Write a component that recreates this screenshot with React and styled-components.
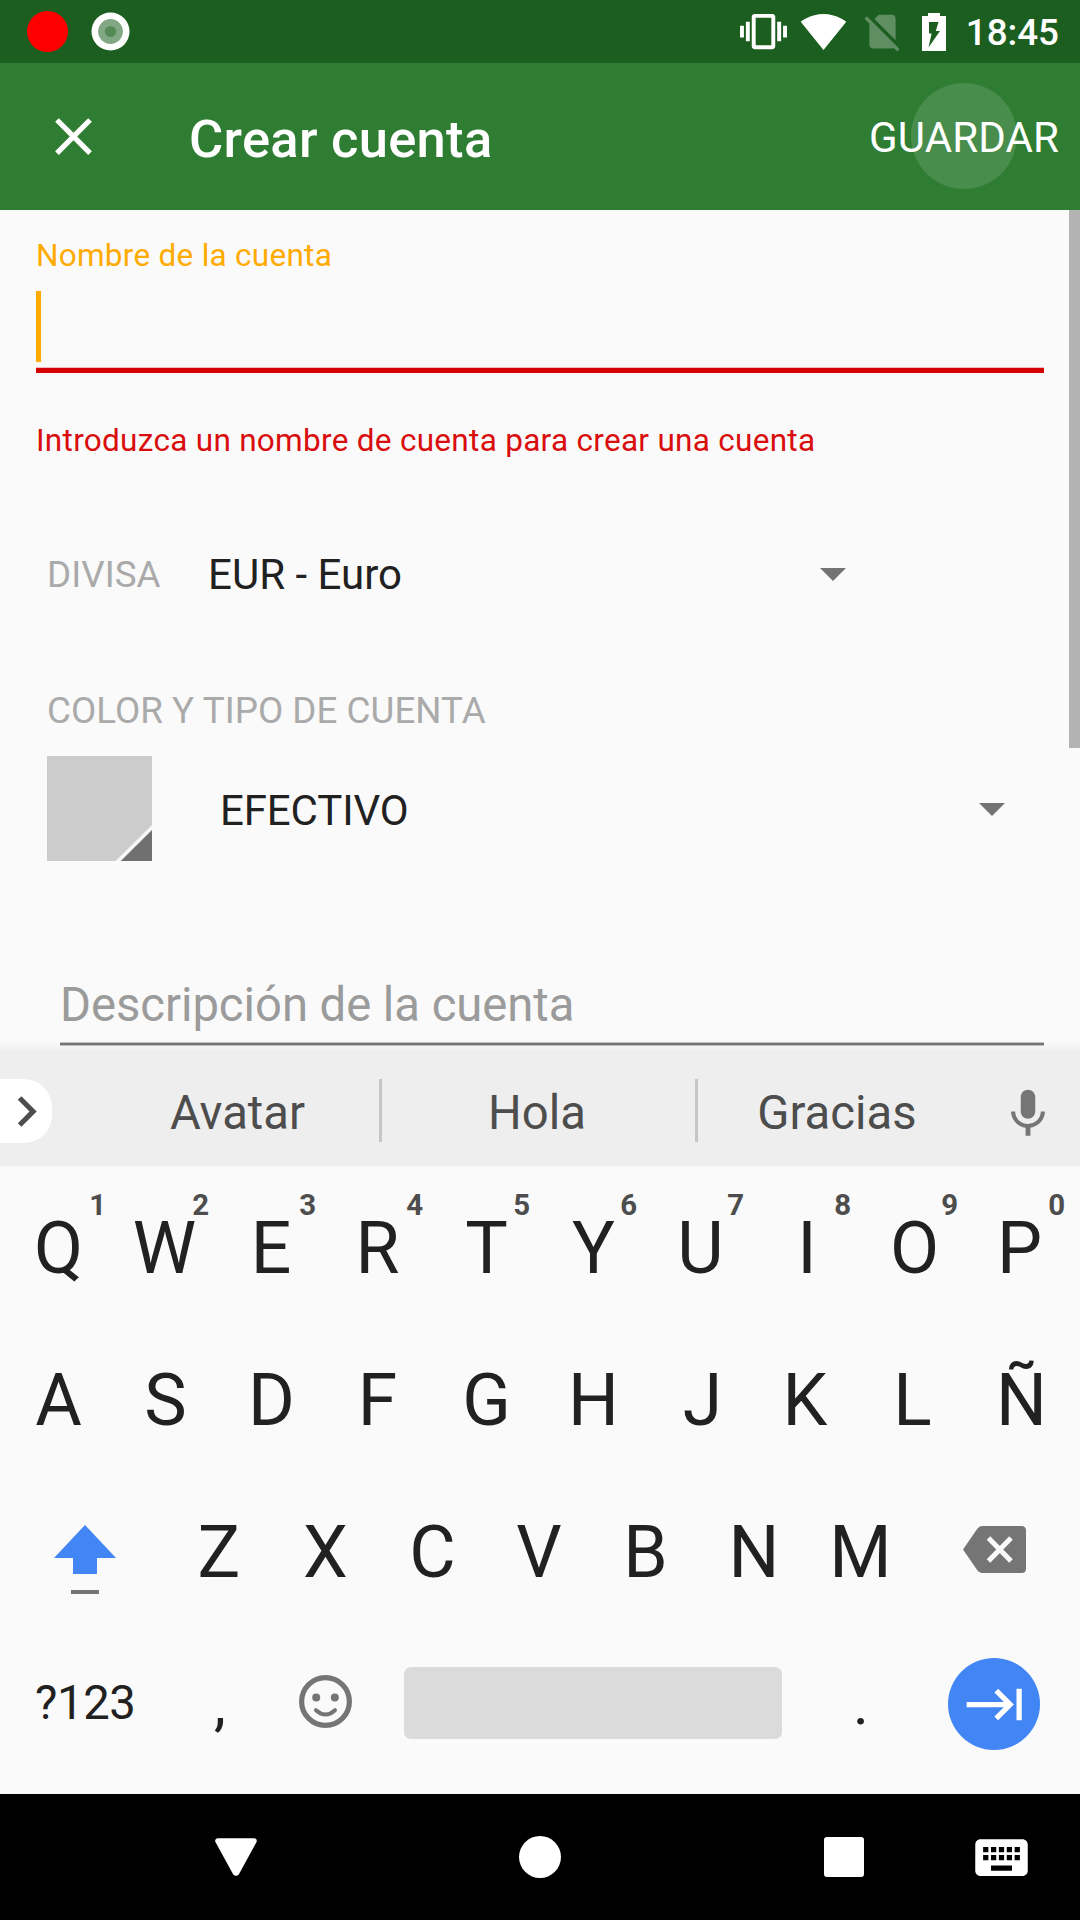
import React from "react";
import styled, { createGlobalStyle } from "styled-components";
import { MdClose, MdVibration, MdChevronRight, MdMic, MdKeyboardTab, MdKeyboard } from "react-icons/md";

const GlobalStyle = createGlobalStyle`
  * { box-sizing: border-box; }
  body { margin: 0; background: #fafafa; font-family: Roboto, "Noto Sans", sans-serif; }
  button { margin: 0; padding: 0; border: 0; background: none; font: inherit; color: inherit; }
  svg { display: block; flex: none; }
`;

const Screen = styled.div`
  width: 1080px;
  height: 1920px;
  display: flex;
  flex-direction: column;
  overflow: hidden;
  color: #212121;
`;

/* Status bar */
const StatusBar = styled.header`
  height: 63px;
  flex: none;
  display: flex;
  align-items: center;
  justify-content: space-between;
  padding: 0 21px 0 27px;
  background: #1b5e20;
  color: #fff;
`;
const StatusGroup = styled.div`
  display: flex;
  align-items: center;
  gap: ${(p) => p.$gap}px;
`;
const RecordDot = styled.span`
  width: 41px;
  height: 41px;
  border-radius: 50%;
  background: #f00;
`;
const Clock = styled.span`
  font-size: 36.75px;
  font-weight: 500;
  line-height: 44px;
  padding-top: 3px;
  margin-left: 3px;
`;

/* App bar */
const AppBar = styled.div`
  height: 147px;
  flex: none;
  display: flex;
  align-items: center;
  padding: 0 21px 0 42px;
  background: #2e7d32;
  color: #fff;
`;
const IconButton = styled.button`
  display: flex;
`;
const Title = styled.h1`
  flex: 1;
  margin: 0;
  padding: 4px 0 0 84px;
  font-size: 52.5px;
  font-weight: 500;
  line-height: 62px;
  letter-spacing: 0.28px;
`;
const SaveButton = styled.button`
  position: relative;
  padding-top: 2px;
  font-size: 42px;
  line-height: 50px;
  letter-spacing: 0.12px;
`;
const Ripple = styled.span`
  position: absolute;
  left: 42px;
  top: -28px;
  width: 106px;
  height: 106px;
  border-radius: 50%;
  background: rgba(255, 255, 255, 0.125);
`;

/* Form */
const Form = styled.main`
  position: relative;
  height: 841px;
  flex: none;
  padding: 27px 36px 0;
  display: flex;
  flex-direction: column;
`;
const ScrollThumb = styled.div`
  position: absolute;
  top: 0;
  right: 0;
  width: 11px;
  height: 538px;
  background: #b3b3b3;
`;
const FieldLabel = styled.label`
  font-size: 31.5px;
  line-height: 37px;
  letter-spacing: 0.27px;
  color: #ffab00;
`;
const NameInput = styled.div`
  height: 99px;
  padding-top: 17px;
  border-bottom: 5px solid #d50000;
  box-shadow: inset 0 -1px 0 #f0bcbc;
`;
const Caret = styled.div`
  width: 5px;
  height: 71px;
  background: #ffab00;
`;
const ErrorText = styled.p`
  margin: 48px 0 0;
  font-size: 31.5px;
  line-height: 40px;
  letter-spacing: 0.29px;
  color: #d90d0d;
`;
const CurrencyRow = styled.div`
  display: flex;
  align-items: center;
  height: 80px;
  margin-top: 73px;
  padding: 0 198.5px 0 11px;
`;
const Caption = styled.span`
  font-size: 36.75px;
  line-height: 44px;
  padding-top: 2px;
  letter-spacing: 0.04px;
  color: #aaa;
`;
const SectionCaption = styled(Caption)`
  margin-top: 73px;
  padding-left: 11px;
`;
const SelectValue = styled.span`
  flex: 1;
  padding: ${(p) => p.$top || 0}px 0 0 ${(p) => p.$left}px;
  font-size: 42px;
  line-height: 50px;
  letter-spacing: ${(p) => p.$tracking || 0}px;
`;
const TypeRow = styled.div`
  display: flex;
  align-items: center;
  height: 105px;
  margin-top: 23px;
  padding: 0 39.5px 0 11px;
`;
const ArrowSlot = styled.span`
  padding-top: 2px;
`;
const DescriptionInput = styled.div`
  height: 75px;
  margin: 109px 0 0 24px;
  border-bottom: 2px solid #757575;
  box-shadow: 0 1px 0 #c4c4c4, inset 0 -1px 0 #c4c4c4;
  font-size: 47.25px;
  line-height: 70px;
  letter-spacing: -0.05px;
  color: #9b9b9b;
`;
const KeyboardShade = styled.div`
  position: absolute;
  left: 0;
  right: 0;
  bottom: 0;
  height: 10px;
  background: linear-gradient(rgba(0, 0, 0, 0), rgba(0, 0, 0, 0.045));
`;

/* Keyboard */
const Suggestions = styled.div`
  height: 115px;
  flex: none;
  display: flex;
  align-items: center;
  background: #eee;
  color: #4d4d4d;
`;
const ExpandButton = styled.button`
  width: 52px;
  height: 64px;
  margin: 5px 45px 0 0;
  display: flex;
  align-items: center;
  border-radius: 0 28px 28px 0;
  background: #fff;
  svg { margin-left: -4px; }
`;
const Suggestion = styled.button`
  width: ${(p) => p.$width}px;
  padding: 8px ${(p) => p.$right || 1}px 0 0;
  text-align: center;
  font-size: 47.25px;
  line-height: 56px;
`;
const Divider = styled.span`
  width: 3px;
  height: 63px;
  margin-top: 4px;
  background: #c6c6c6;
`;
const MicButton = styled.button`
  margin: 10px 0 0 22px;
  color: #757575;
`;
const Keyboard = styled.section`
  height: 628px;
  flex: none;
  padding: 6px 5px 0;
  background: #fafafa;
`;
const KeyRow = styled.div`
  display: flex;
  height: 152px;
`;
const Key = styled.button`
  position: relative;
  width: ${(p) => p.$width || 107}px;
  display: flex;
  align-items: center;
  justify-content: center;
  font-size: ${(p) => p.$size || 71.4}px;
  line-height: 84px;
`;
const Letter = styled.span`
  padding-top: ${(p) => p.$top ?? 2}px;
  transform: translateX(${(p) => p.$nudge || 0}px);
`;
const ModeLabel = styled.span`
  padding-bottom: 2px;
  letter-spacing: -0.4px;
`;
const KeyHint = styled.span`
  position: absolute;
  top: 15px;
  right: ${(p) => p.$right}px;
  font-size: 29.4px;
  font-weight: 700;
  line-height: 36px;
  color: #4d4d4d;
`;
const ShiftFace = styled.span`
  display: flex;
  flex-direction: column;
  align-items: center;
  gap: 16px;
  padding: 14px 1px 0 0;
`;
const ShiftMark = styled.span`
  width: 28px;
  height: 4px;
  background: #757575;
`;
const IconFace = styled.span`
  padding: 0 ${(p) => p.$right || 0}px 5px 0;
`;
const SpaceBar = styled.button`
  width: 378px;
  height: 72px;
  align-self: center;
  margin: 0 26px 2px 24px;
  border-radius: 7px;
  background: #dbdbdb;
`;
const EnterFace = styled.span`
  width: 92px;
  height: 92px;
  display: flex;
  align-items: center;
  justify-content: center;
  margin-right: 2px;
  padding-left: 3px;
  border-radius: 50%;
  background: #4285f4;
  color: #fff;
`;

/* System navigation */
const NavBar = styled.nav`
  height: 126px;
  flex: none;
  display: flex;
  align-items: center;
  padding-left: 215px;
  background: #000;
  color: #fff;
`;
const NavItem = styled.button`
  margin-left: ${(p) => p.$gap || 0}px;
`;
const HomeDot = styled.span`
  display: block;
  width: 42px;
  height: 42px;
  border-radius: 50%;
  background: #fff;
`;
const RecentsSquare = styled.span`
  display: block;
  width: 40px;
  height: 40px;
  border-radius: 3px;
  background: #fff;
`;

const TargetIcon = () => (
  <svg width="39" height="39" viewBox="0 0 39 39">
    <circle cx="19.5" cy="19.5" r="19" fill="#fff" />
    <circle cx="19.5" cy="19.5" r="12.4" fill="#82a785" />
    <circle cx="19.5" cy="19.5" r="5.6" fill="#558a57" />
  </svg>
);
const WifiIcon = () => (
  <svg width="47" height="47" viewBox="0 0 24 24" fill="currentColor">
    <path d="M12.01 21.49L23.64 7c-.45-.34-4.93-4-11.64-4C5.28 3 .81 6.66.36 7l11.63 14.49.01.01.01-.01z" />
  </svg>
);
const NoSimIcon = () => (
  <svg width="45" height="45" viewBox="0 0 24 24" fill="rgba(255,255,255,0.3)">
    <path d="M18.99 5c0-1.1-.89-2-1.99-2h-7L7.66 5.34 19 16.68 18.99 5zM3.65 3.88L2.38 5.15 5 7.77V19c0 1.1.9 2 2 2h10.01c.35 0 .67-.1.96-.26l1.88 1.88 1.27-1.27L3.65 3.88z" />
  </svg>
);
const BatteryIcon = () => (
  <svg width="24" height="38" viewBox="0 0 24 38">
    <path fill="#fff" fillRule="evenodd" d="M6 0H18V3H24V38H0V3H6Z M7 9V20.6H9.6L6.5 34.5L18 18H13.8L16.5 9Z" />
  </svg>
);
const DropArrow = () => (
  <svg width="26" height="13" viewBox="0 0 26 13">
    <path d="M0 0H26L13 13Z" fill="#737373" />
  </svg>
);
const Swatch = () => (
  <svg width="105" height="105" viewBox="0 0 105 105">
    <path d="M0 0H105V105H0Z" fill="#ccc" />
    <path d="M105 69V105H68.5Z" fill="#f7f7f7" />
    <path d="M105 74V105H73.8Z" fill="#707070" />
  </svg>
);
const ShiftArrow = () => (
  <svg width="62" height="49" viewBox="0 0 62 49">
    <path d="M31 0L62 33H43V49H19V33H0Z" fill="#4285f4" />
  </svg>
);
const BackspaceIcon = () => (
  <svg width="63" height="47" viewBox="0 0 63 47">
    <path d="M19 0H58.500Q63 0 63 4.500V42.500Q63 47 58.500 47H19Q16 47 14.300 44.300L0 23.500L14.300 2.700Q16 0 19 0Z" fill="#757575" />
    <path d="M25.500 12L48 35M48 12L25.500 35" stroke="#fafafa" strokeWidth="5" />
  </svg>
);
const SmileIcon = () => (
  <svg width="53" height="53" viewBox="0 0 53 53" fill="none" stroke="#757575">
    <circle cx="26.5" cy="26.5" r="23.9" strokeWidth="5.2" />
    <circle cx="17.200" cy="22.600" r="4" fill="#757575" stroke="none" />
    <circle cx="35.800" cy="22.600" r="4" fill="#757575" stroke="none" />
    <path d="M17 35.200Q26.500 43.800 36 35.200" strokeWidth="4" strokeLinecap="round" />
  </svg>
);
const BackTriangle = () => (
  <svg width="42" height="38" viewBox="0 0 42 38">
    <path d="M3 3H39L21.500 35H20.500Z" fill="#fff" stroke="#fff" strokeWidth="5.500" strokeLinejoin="round" />
  </svg>
);

const TOP = [["Q", 1], ["W", 2], ["E", 3], ["R", 4], ["T", 5], ["Y", 6], ["U", 7], ["I", 8], ["O", 9], ["P", 0]];
const MIDDLE = [..."ASDFGHJKLÑ"];
const BOTTOM = [..."ZXCVBNM"];

const NUDGE = { W: -1, E: -1.5, R: -2, D: -1, F: -2, J: 2, K: -2.5, L: -2, P: -2, B: -1.5, I: -0.5, X: -0.5, V: -1, C: -0.5, M: -0.5 };

const LetterKey = ({ letter, children }) => (
  <Key>
    <Letter $nudge={NUDGE[letter]}>{letter}</Letter>
    {children}
  </Key>
);

export default function App() {
  return (
    <Screen>
      <GlobalStyle />
      <StatusBar>
        <StatusGroup $gap={23}>
          <RecordDot />
          <TargetIcon />
        </StatusGroup>
        <StatusGroup $gap={17}>
          <StatusGroup $gap={13}>
            <MdVibration size={47} />
            <WifiIcon />
            <NoSimIcon />
          </StatusGroup>
          <BatteryIcon />
          <Clock>18:45</Clock>
        </StatusGroup>
      </StatusBar>

      <AppBar>
        <IconButton aria-label="Cerrar"><MdClose size={63} /></IconButton>
        <Title>Crear cuenta</Title>
        <SaveButton><Ripple />GUARDAR</SaveButton>
      </AppBar>

      <Form>
        <FieldLabel>Nombre de la cuenta</FieldLabel>
        <NameInput><Caret /></NameInput>
        <ErrorText>Introduzca un nombre de cuenta para crear una cuenta</ErrorText>
        <CurrencyRow>
          <Caption>DIVISA</Caption>
          <SelectValue $left={47.5} $top={2}>EUR - Euro</SelectValue>
          <DropArrow />
        </CurrencyRow>
        <SectionCaption>COLOR Y TIPO DE CUENTA</SectionCaption>
        <TypeRow>
          <Swatch />
          <SelectValue $left={68} $top={4} $tracking={-0.12}>EFECTIVO</SelectValue>
          <ArrowSlot><DropArrow /></ArrowSlot>
        </TypeRow>
        <DescriptionInput>Descripción de la cuenta</DescriptionInput>
        <ScrollThumb />
        <KeyboardShade />
      </Form>

      <Suggestions>
        <ExpandButton aria-label="Más"><MdChevronRight size={61} /></ExpandButton>
        <Suggestion $width={282}>Avatar</Suggestion>
        <Divider />
        <Suggestion $width={313} $right={3}>Hola</Suggestion>
        <Divider />
        <Suggestion $width={279}>Gracias</Suggestion>
        <MicButton aria-label="Voz"><MdMic size={58} /></MicButton>
      </Suggestions>

      <Keyboard>
        <KeyRow>
          {TOP.map(([letter, digit]) => (
            <LetterKey key={letter} letter={letter}>
              <KeyHint $right={digit === 1 ? 6 : 10}>{digit}</KeyHint>
            </LetterKey>
          ))}
        </KeyRow>
        <KeyRow>
          {MIDDLE.map((letter) => <LetterKey key={letter} letter={letter} />)}
        </KeyRow>
        <KeyRow>
          <Key $width={160.5} aria-label="Mayúsculas">
            <ShiftFace><ShiftArrow /><ShiftMark /></ShiftFace>
          </Key>
          {BOTTOM.map((letter) => <LetterKey key={letter} letter={letter} />)}
          <Key $width={160.5} aria-label="Borrar"><IconFace><BackspaceIcon /></IconFace></Key>
        </KeyRow>
        <KeyRow>
          <Key $width={160.5} $size={47.25}><ModeLabel>?123</ModeLabel></Key>
          <Key $size={60}><Letter $nudge={1} $top={0}>,</Letter></Key>
          <Key aria-label="Emoji"><IconFace $right={2}><SmileIcon /></IconFace></Key>
          <SpaceBar aria-label="Espacio" />
          <Key $size={60}>.</Key>
          <Key $width={160.5} aria-label="Siguiente">
            <EnterFace><MdKeyboardTab size={63} /></EnterFace>
          </Key>
        </KeyRow>
      </Keyboard>

      <NavBar>
        <NavItem aria-label="Atrás"><BackTriangle /></NavItem>
        <NavItem $gap={262} aria-label="Inicio"><HomeDot /></NavItem>
        <NavItem $gap={263} aria-label="Recientes"><RecentsSquare /></NavItem>
        <NavItem $gap={106} aria-label="Teclado"><MdKeyboard size={63} /></NavItem>
      </NavBar>
    </Screen>
  );
}
